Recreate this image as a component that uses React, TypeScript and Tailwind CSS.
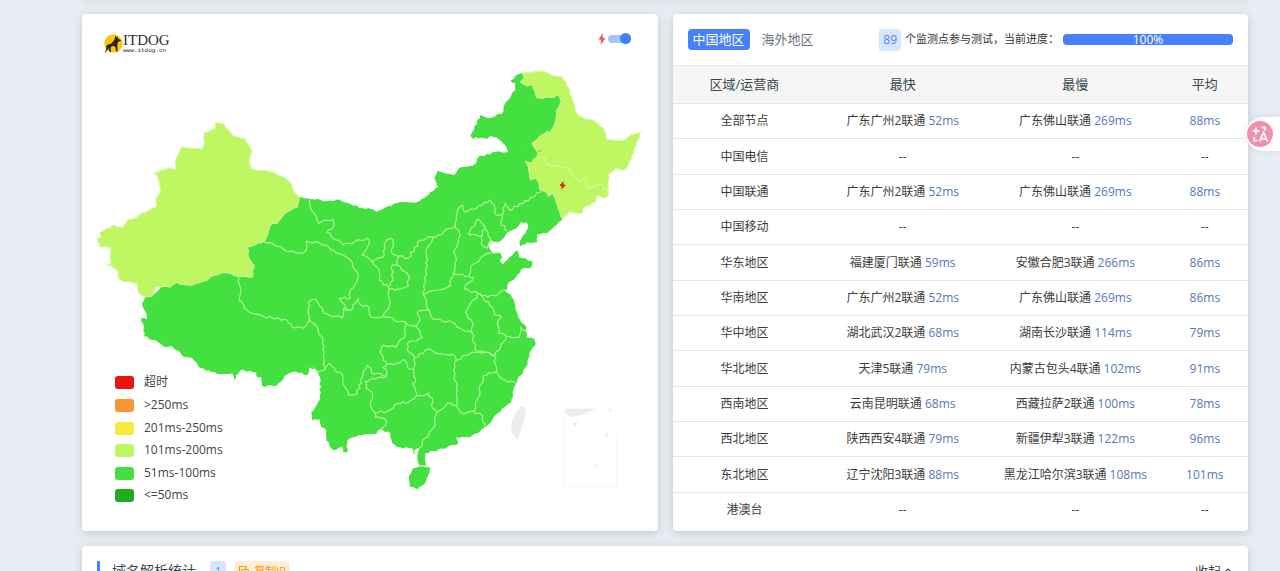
import React, { useState } from "react";

type Point = [number, number];

const parse = (s: string): Point[] =>
  s.trim().split(/\s+/).map((p) => p.split(",").map(Number) as Point);

// Subdivides each segment and nudges the new vertices, which gives borders a natural, uneven edge.
function rough(points: string, close = false, amount = 1.2): string {
  const pts = parse(points);
  if (close) pts.push(pts[0]);
  const out: string[] = [pts[0].join(" ")];
  for (let i = 1; i < pts.length; i++) {
    const [ax, ay] = pts[i - 1];
    const [bx, by] = pts[i];
    const len = Math.hypot(bx - ax, by - ay) || 1;
    const n = Math.max(1, Math.round(len / 3));
    for (let k = 1; k < n; k++) {
      const t = k / n;
      const x = ax + (bx - ax) * t;
      const y = ay + (by - ay) * t;
      const noise = Math.sin(x * 12.9 + y * 78.2) * amount;
      out.push(`${(x - ((by - ay) / len) * noise).toFixed(1)} ${(y + ((bx - ax) / len) * noise).toFixed(1)}`);
    }
    out.push(`${bx} ${by}`);
  }
  return "M" + out.join("L") + (close ? "Z" : "");
}

const mainland =
  "285,210 299,197 308,198 327,201 340,200 348,203 350,204 365,209 371,209 376,212 388,206 397,203 417,202 424,198 430,192 438,187 434,178 437,171 453,175 461,167 472,166 476,163 478,157 495,152 508,152 506,147 498,139 491,136 487,139 475,137 473,139 470,136 472,132 480,115 490,118 503,112 505,103 515,90 515,83 510,81 515,76 522,73 545,80 565,90 570,110 570,160 590,185 562,219 547,233 537,234 537,242 527,242 520,246 519,243 525,233 528,227 526,222 520,222 516,228 507,232 502,239 497,242 490,240 488,245 492,253 500,253 502,257 500,262 503,264 507,260 512,255 517,250 519,257 532,261 531,267 521,269 519,273 507,285 507,289 504,290 510,294 515,305 518,317 526,327 526,337 534,339 535,345 529,353 527,365 517,380 513,390 511,402 502,408 485,427 478,433 467,437 456,437 458,443 447,447 425,453 426,465 419,465 417,455 419,448 414,450 413,455 412,448 397,447 392,443 390,433 380,429 374,434 362,435 353,437 347,440 347,452 343,452 342,446 333,450 326,440 326,430 321,427 320,419 312,420 311,412 320,398 320,378 316,369 309,367 307,375 295,371 287,374 277,385 262,386 261,377 257,377 256,372 240,370 236,375 234,380 232,373 220,374 200,368 192,358 185,357 172,346 165,347 158,342 144,336 144,327 141,318 147,319 146,312 142,303 145,297 152,295 175,275 235,260";

const xinjiang =
  "215,123 223,123 225,127 233,136 245,139 252,152 249,160 251,169 273,172 289,181 294,192 299,197 297,207 289,211 283,215 277,223 271,224 264,241 246,248 249,250 248,257 254,265 252,277 243,276 238,276 230,273 220,273 210,277 207,280 190,285 182,284 177,282 170,287 157,286 153,293 152,296 143,296 138,292 137,283 123,281 118,277 118,271 111,265 106,264 111,263 110,247 100,247 97,239 101,237 100,232 115,225 116,227 123,227 127,220 135,218 142,213 156,207 156,198 161,192 158,177 154,173 170,168 176,169 175,163 181,147 187,148 202,149 204,145 204,133 215,128";

const heilongjiang =
  "522,73 542,71 553,76 562,77 568,88 573,103 577,115 585,119 593,120 603,128 607,140 625,140 630,135 640,132 639,138 636,142 633,153 625,170 615,168 608,174 608,190 603,188 601,184 588,188 583,178 580,182 575,177 572,175 570,169 558,166 547,165 544,158 537,157 538,153 532,143 547,131 549,134 555,122 556,112 561,101 557,94 554,97 537,98 532,85 527,86 520,82 524,77";

const jilin =
  "608,190 608,195 603,198 597,195 595,202 582,208 582,213 575,213 569,211 562,219 560,215 557,205 552,193 548,196 546,192 540,190 538,182 536,178 530,180 528,167 525,161 532,163 533,159 537,157 544,158 547,165 558,166 570,169 572,175 575,177 580,182 583,178 588,188 601,184 603,188";

const hainan = "419,466 430,467 428,475 424,484 417,489 409,486 409,475 413,468";

const borders = [
  "238,276 240,287 239,300 247,310 263,316 287,320 292,327 303,328 309,318 317,327 323,340 324,370 317,372 313,367",
  "324,370 329,363 335,370 340,372 348,395 357,393 362,377 367,365 371,368 373,374 380,373 386,376 378,377 365,381 366,388 372,392 370,402 374,412 375,417 386,420 383,427 380,429",
  "386,376 387,372 382,367 387,364 397,363 403,359 409,369 413,369 415,382 412,383 416,396",
  "374,412 387,411 397,403 408,402 416,396 428,393 432,398 432,408 437,412 433,428 422,442 419,448",
  "437,412 447,403 456,405 462,413 473,411 482,415 484,427",
  "473,411 477,400 483,375 496,371 502,379 515,383",
  "496,371 494,355 485,352 475,352 463,355 456,360 453,370 457,390 456,405",
  "456,360 452,354 443,354 427,349 423,353 414,357 413,369",
  "414,357 407,350 407,343 422,337 417,328 406,323 405,335 395,347 383,345 380,353 383,360 387,364",
  "309,318 308,303 315,299 325,313 342,318 343,308 350,310 358,298 360,304 369,307 371,317 383,316 406,323",
  "264,241 272,243 283,249 293,251 300,253 306,250 306,241 320,243 333,250 352,262 358,277 350,290 350,298 339,298 348,310",
  "308,198 313,212 318,223 333,219 333,227 327,232 343,245 367,238 369,243 362,255 372,262 383,257 385,242 390,238 393,242 391,252 399,256 397,265 391,266 393,280 388,287 379,280 378,268 372,262",
  "397,265 408,275 408,285 400,289 389,289 389,305 383,316",
  "388,287 389,289",
  "399,256 408,258 420,240 432,237 426,253 427,260 423,295 429,310 417,312 419,317 417,328",
  "429,310 433,319 452,322 460,328 472,333 475,350 485,352 493,356",
  "432,237 438,235 455,225 460,235 453,252 456,260 453,273 450,285 423,295",
  "453,273 468,276 470,268 480,258 491,253",
  "468,276 473,277 464,289 477,293 487,297 498,294 504,290",
  "455,225 457,210 462,205 465,212 482,205 490,200 494,205 496,215 502,214 500,222 507,231",
  "502,214 505,203 509,210 533,197 541,190",
  "478,219 485,227 482,235 469,235 470,230 475,223 478,219",
  "485,229 490,238 488,245 487,248 481,243 482,235",
  "477,293 477,298 470,303 465,312 472,322 472,333",
  "477,293 483,298 492,307 494,314 501,317 497,323 498,333 506,336 519,337 520,327 525,331",
  "506,336 500,347 493,356",
];

function ChinaMap() {
  return (
    <svg viewBox="82 64 575 448" className="block w-full" role="img" aria-label="中国地区">
      <g strokeLinejoin="round">
        <path d={rough(mainland, true, 0.8)} fill="#43e03f" />
        <path d="M525 150L535 140 550 150 540 162Z" fill="#bef761" />
        <path d={rough(hainan, true, 0.5)} fill="#43e03f" />
        <g fill="#bef761" stroke="#d5f9a0" strokeWidth="1">
          <path d={rough(xinjiang, true, 0.6)} />
          <path d={rough(heilongjiang, true, 0.6)} />
          <path d={rough(jilin, true, 0.6)} />
        </g>
        <path d="M524 148L531 144 537 153 536 157 532 159Z" fill="#43e03f" />
        <g fill="none" stroke="#b4f59b" strokeWidth="1.100">
          {borders.map((b) => (
            <path key={b} d={rough(b)} />
          ))}
        </g>
      </g>
      <path d="M418.500 465.500H427" stroke="#c9f5c4" />
      <path d="M521 406L525 408 525 414 522 425 519 434 516 442 516 437 511 432 511 422 515 413Z" fill="#ececec" />
      <path d="M563 412L566 408.500H595L586 413 571 417Z" fill="#ececec" />
      <path d="M564 412H562.500V486.500H616.500V434" fill="none" stroke="#f7f7f7" />
      <path d="M573 425l2-3 2 0-1 3-2 2ZM608 409l3 0-1 3ZM605 434l2-2 0 4-2 2ZM604 449l2-1-1 3ZM594 465l2-2 0 4ZM568 465l1-3 1 2ZM573 449l1-1 0 2ZM612 418l2-2Z" fill="#e9e9e9" />
      <path d="M537.500 151.500l3.500-1" stroke="#84b56f" />
      <path d="M563.500 181l-4.500 4.500 2.500.8-1 3.700 5-5-2.700-.8Z" fill="#e4200c" />
    </svg>
  );
}

const legend = [
  { label: "超时", color: "bg-[#ec1313]" },
  { label: ">250ms", color: "bg-[#f79535]" },
  { label: "201ms-250ms", color: "bg-[#f5ea3f]" },
  { label: "101ms-200ms", color: "bg-[#bef761]" },
  { label: "51ms-100ms", color: "bg-[#43e03f]" },
  { label: "<=50ms", color: "bg-[#20ab20]" },
];

const rows: string[][] = [
  ["全部节点", "广东广州2联通", "52ms", "广东佛山联通", "269ms", "88ms"],
  ["中国电信"],
  ["中国联通", "广东广州2联通", "52ms", "广东佛山联通", "269ms", "88ms"],
  ["中国移动"],
  ["华东地区", "福建厦门联通", "59ms", "安徽合肥3联通", "266ms", "86ms"],
  ["华南地区", "广东广州2联通", "52ms", "广东佛山联通", "269ms", "86ms"],
  ["华中地区", "湖北武汉2联通", "68ms", "湖南长沙联通", "114ms", "79ms"],
  ["华北地区", "天津5联通", "79ms", "内蒙古包头4联通", "102ms", "91ms"],
  ["西南地区", "云南昆明联通", "68ms", "西藏拉萨2联通", "100ms", "78ms"],
  ["西北地区", "陕西西安4联通", "79ms", "新疆伊犁3联通", "122ms", "96ms"],
  ["东北地区", "辽宁沈阳3联通", "88ms", "黑龙江哈尔滨3联通", "108ms", "101ms"],
  ["港澳台"],
];

function Logo() {
  return (
    <a href="#" className="flex items-center text-[#332e2e]">
      <svg viewBox="0 0 20 20" className="size-5" aria-hidden="true">
        <circle cx="10.500" cy="9.500" r="9.200" fill="#fbc90a" />
        <path
          d="M12.500 1.500l1 2 .6-1.500.8 2.500 3 1.800-.5 1-2.300.4-.8 3.300.3 6.500h-1.500l-.9-5-3-.6-1.700 1.700.6 4.400H6.700l-.9-3.700-2.600 3.500-1.700 1.500 1.600-3.300.5-3.500-1.400.4 2-2 4.500-1.700 2.600-3.200Z"
          fill="#2a2416"
        />
      </svg>
      <span className="flex flex-col">
        <span className="font-['Liberation_Serif',serif] text-[15px] leading-[15px]">ITDOG</span>
        <span className="font-['Liberation_Mono',monospace] text-[6px] leading-[6px]">www.itdog.cn</span>
      </span>
    </a>
  );
}

const card = "rounded bg-white shadow-[0_2px_10px_rgba(60,70,90,0.22)]";

function MapCard() {
  const [fast, setFast] = useState(true);
  return (
    <section className={`${card} pb-[19px]`}>
      <div className="flex h-[50px] items-start justify-between pt-[19px] pr-[27px] pl-[21px]">
        <Logo />
        <label className="flex h-[11px] items-center gap-0.5">
          <svg viewBox="0 0 8 12" className="h-3 w-2" aria-hidden="true">
            <path d="M5 0L.5 6.500l2.800.3L2.500 12 7.500 5 4.500 4.700Z" fill="#f4505c" />
          </svg>
          <span className="relative flex w-[23px] items-center">
            <input
              type="checkbox"
              aria-label="快速模式"
              checked={fast}
              onChange={(e) => setFast(e.target.checked)}
              className="peer h-2 w-full appearance-none rounded-full bg-gray-300 checked:bg-[#a3c4fd]"
            />
            <span className="pointer-events-none absolute left-0 size-[11px] rounded-full bg-gray-400 peer-checked:right-0 peer-checked:left-auto peer-checked:bg-[#3f7ff8]" />
          </span>
        </label>
      </div>
      <div className="relative">
        <ChinaMap />
        <ul className="absolute bottom-[10px] left-[33px] flex h-[126px] flex-col justify-between">
          {legend.map((l) => (
            <li key={l.label} className="flex h-[13px] items-center gap-[10px] text-xs leading-[13px] text-[#444]">
              <span className={`h-[13px] w-[19px] rounded-[3px] ${l.color}`} />
              <span className="pb-0.5">{l.label}</span>
            </li>
          ))}
        </ul>
      </div>
    </section>
  );
}

function Result({ name, time }: { name?: string; time?: string }) {
  if (!time) return <>--</>;
  return (
    <>
      {name && `${name} `}
      <span className="text-[#5577c0]">{time}</span>
    </>
  );
}

function TableCard() {
  return (
    <section className={`${card} overflow-hidden`}>
      <div className="flex h-[51px] items-center justify-between px-[15px]">
        <div className="flex items-center gap-3 text-[13px]">
          <button className="h-[21px] rounded bg-[#4680fa] px-[5px] leading-[21px] text-white">中国地区</button>
          <button className="leading-[21px] text-[#6b7280]">海外地区</button>
        </div>
        <div className="flex items-center gap-1 text-[11px] text-[#333]">
          <span className="h-[22px] rounded-[3px] bg-[#d8e5fe] px-[4px] text-xs leading-[22px] text-[#5086f5]">89</span>
          <span>个监测点参与测试，当前进度：</span>
          <div
            role="progressbar"
            aria-valuenow={100}
            className="h-[11px] w-[170px] rounded bg-[#4680fa] text-center text-xs leading-[12px] text-white"
          >
            100%
          </div>
        </div>
      </div>
      <table className="w-full table-fixed border-collapse text-center text-xs text-[#3c3c3c]">
        <colgroup>
          <col className="w-[25%]" />
          <col className="w-[30%]" />
          <col className="w-[30%]" />
          <col className="w-[15%]" />
        </colgroup>
        <thead>
          <tr className="h-[38px] border-y border-[#e5e7ea] bg-[#f6f6f6] text-[13px] text-[#37474f]">
            <th className="font-normal">区域/运营商</th>
            <th className="font-normal">最快</th>
            <th className="font-normal">最慢</th>
            <th className="font-normal">平均</th>
          </tr>
        </thead>
        <tbody>
          {rows.map((r) => (
            <tr key={r[0]} className="h-[35px] border-b border-[#e3e7ea] last:border-0 nth-[3n+2]:h-9">
              <td>{r[0]}</td>
              <td><Result name={r[1]} time={r[2]} /></td>
              <td><Result name={r[3]} time={r[4]} /></td>
              <td><Result time={r[5]} /></td>
            </tr>
          ))}
        </tbody>
      </table>
    </section>
  );
}

export default function App() {
  return (
    <div className="relative h-screen overflow-hidden bg-[#e9edf3] font-['Open_Sans','Noto_Sans_CJK_SC',sans-serif]">
      <main className="flex flex-col gap-[15px] pr-8 pl-[82px]">
        <div className={`${card} -mt-1 h-[3px]`} />
        <div className="grid grid-cols-2 gap-[15px]">
          <MapCard />
          <TableCard />
        </div>
        <section className={`${card} flex h-[300px] items-start justify-between p-[15px]`}>
          <div className="flex h-5 items-center">
            <span className="h-5 w-[3px] bg-[#4680fa]" />
            <h2 className="ml-3 text-sm text-[#37474f]">域名解析统计</h2>
            <span className="ml-[14px] rounded-[3px] bg-[#d8e5fe] px-[5px] text-[11px] leading-5 text-[#5086f5]">1</span>
            <button className="ml-2 flex h-5 items-center gap-1 rounded bg-[#ffeedb] px-1 text-[11px] text-[#ff9800]">
              <svg viewBox="0 0 12 12" className="size-3" fill="none" stroke="currentColor" strokeWidth="1.200" aria-hidden="true">
                <path d="M3.500 8H1.500V1.500H8V4" />
                <rect x="4" y="4.500" width="6.500" height="6" rx="1" />
              </svg>
              复制IP
            </button>
          </div>
          <button className="flex h-5 items-center gap-0.5 text-[13px] text-[#444]">
            收起
            <svg viewBox="0 0 10 10" className="size-[10px]" fill="none" stroke="currentColor" strokeWidth="1.200" aria-hidden="true">
              <path d="M1.500 6.500L5 3l3.500 3.500" />
            </svg>
          </button>
        </section>
      </main>
      <button
        aria-label="翻译"
        className="absolute top-[117px] right-0 flex h-[34px] w-[34px] items-center rounded-l-full bg-white pl-px shadow-[0_0_6px_rgba(60,75,110,0.12)]"
      >
        <svg viewBox="0 0 26 26" className="size-[26px]" fill="none" stroke="white" aria-hidden="true">
          <circle cx="13" cy="13" r="13" fill="#f08fae" stroke="none" />
          <path d="M9 5.500l1.200 3.300 3.300 1.200-3.300 1.200L9 14.500 7.800 11.200 4.500 10l3.300-1.200Z" fill="white" stroke="none" />
          <path d="M14.500 6.500h3.500v3" strokeWidth="1.800" />
          <path d="M7 16v3.500h3.500" strokeWidth="1.800" />
          <path d="M12.500 20.500L16.500 11.500l4 9M14 17.800h5" strokeWidth="1.800" />
        </svg>
      </button>
    </div>
  );
}
